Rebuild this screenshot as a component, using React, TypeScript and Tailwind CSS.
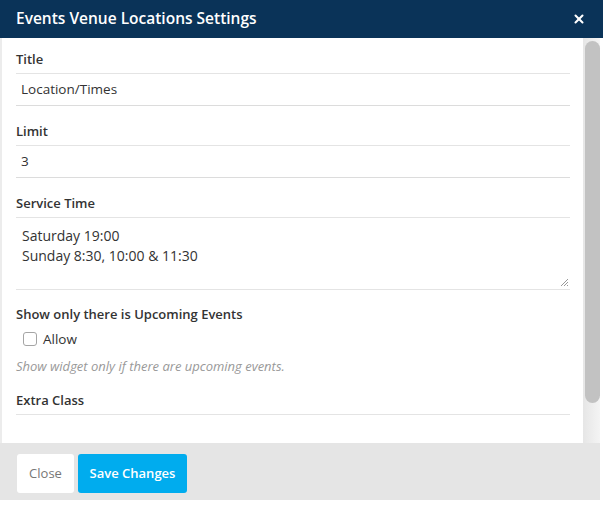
import { X } from 'lucide-react'

function Label({ children }: { children: React.ReactNode }) {
  return <div className="text-[13px] font-semibold leading-[18px] text-[#333]">{children}</div>
}

function TextInput({ value }: { value: string }) {
  return (
    <div className="mt-[5px] flex h-[33px] items-center border-t border-b border-[#e4e4e4] border-b-[#dcdcdc] px-[5px] text-[13.5px] text-[#333]">
      {value}
    </div>
  )
}

export default function App() {
  return (
    <div className="flex h-[505px] w-[603px] flex-col bg-white font-['Open_Sans',sans-serif]">
      <div className="flex h-[38px] shrink-0 items-center justify-between bg-[#0a3358] pl-4 pr-[17px]">
        <span className="text-[15.5px] font-semibold text-white">Events Venue Locations Settings</span>
        <X className="h-[14px] w-[14px] text-white" strokeWidth={3.5} />
      </div>

      <div className="flex h-[405px] w-[600px] shrink-0 border-l-2 border-[#ececec]">
        <div className="flex-1 overflow-hidden pl-[14px] pr-[13px] pt-[12px]">
          <Label>Title</Label>
          <TextInput value="Location/Times" />

          <div className="mt-4">
            <Label>Limit</Label>
            <TextInput value="3" />
          </div>

          <div className="mt-4">
            <Label>Service Time</Label>
            <div className="relative mt-[5px] h-[73px] border-t border-b border-[#e4e4e4] px-[6px] pt-[8px] text-[14px] leading-[20px] text-[#333]">
              <div>Saturday 19:00</div>
              <div>Sunday 8:30, 10:00 &amp; 11:30</div>
              <svg className="absolute bottom-[2px] right-[1px]" width="10" height="10" viewBox="0 0 10 10">
                <path d="M9 2L2 9M9 5L5 9M9 8L8 9" stroke="#999" strokeWidth="1" />
              </svg>
            </div>
          </div>

          <div className="mt-[15px]">
            <Label>Show only there is Upcoming Events</Label>
            <div className="mt-[6px] flex items-center pl-[7px]">
              <span className="h-[14px] w-[14px] rounded-[3px] border border-[#a5a5a5] bg-white" />
              <span className="ml-[6px] text-[13.5px] text-[#333]">Allow</span>
            </div>
            <div className="mt-[8px] text-[13px] italic text-[#999]">Show widget only if there are upcoming events.</div>
          </div>

          <div className="mt-[14px]">
            <Label>Extra Class</Label>
            <div className="mt-[5px] h-[33px] border-t border-[#e4e4e4]" />
          </div>
        </div>

        <div className="flex w-[17px] shrink-0 bg-gradient-to-r from-[#e6e6e6] to-[#f4f4f4] pl-[2px] pt-[3px]">
          <div className="h-[362px] w-[15px] rounded-full bg-[#c2c2c2]" />
        </div>
      </div>

      <div className="flex h-[57px] w-[600px] shrink-0 items-start gap-[4px] bg-[#e5e5e5] pl-[17px] pt-[11px]">
        <button className="h-[39px] w-[57px] rounded-[3px] bg-white text-[13px] text-[#777]">Close</button>
        <button className="h-[39px] w-[109px] rounded-[3px] bg-[#00acee] text-[13px] font-semibold text-white">Save Changes</button>
      </div>
    </div>
  )
}
